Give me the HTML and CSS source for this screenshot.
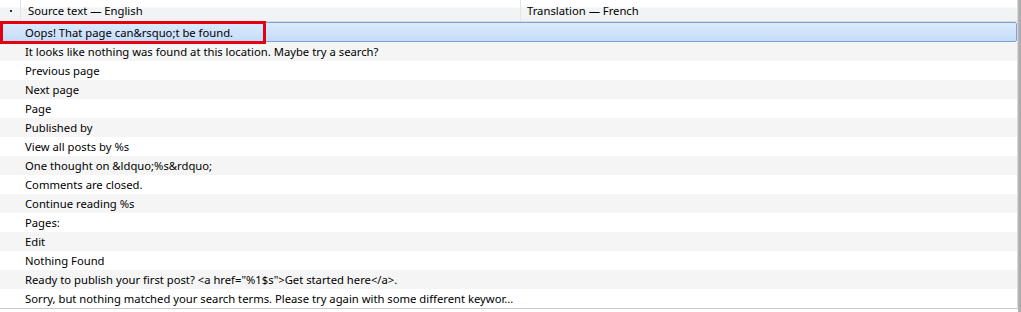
FILE: index.html
```html
<!DOCTYPE html>
<html>
<head>
<meta charset="utf-8">
<link rel="stylesheet" href="styles.css">
</head>
<body>
<div class="frame">
  <div class="list">
    <div class="header">
      <div class="hcell hdot"><span class="dot"></span></div>
      <div class="hcell hsrc">Source text — English</div>
      <div class="hcell htr">Translation — French</div>
    </div>
    <div class="rows">
      <div class="row selected"><span class="src">Oops! That page can&amp;rsquo;t be found.</span></div>
      <div class="row alt"><span class="src">It looks like nothing was found at this location. Maybe try a search?</span></div>
      <div class="row"><span class="src">Previous page</span></div>
      <div class="row alt"><span class="src">Next page</span></div>
      <div class="row"><span class="src">Page</span></div>
      <div class="row alt"><span class="src">Published by</span></div>
      <div class="row"><span class="src">View all posts by %s</span></div>
      <div class="row alt"><span class="src">One thought on &amp;ldquo;%s&amp;rdquo;</span></div>
      <div class="row"><span class="src">Comments are closed.</span></div>
      <div class="row alt"><span class="src">Continue reading %s</span></div>
      <div class="row"><span class="src">Pages:</span></div>
      <div class="row alt"><span class="src">Edit</span></div>
      <div class="row"><span class="src">Nothing Found</span></div>
      <div class="row alt"><span class="src">Ready to publish your first post? &lt;a href="%1$s"&gt;Get started here&lt;/a&gt;.</span></div>
      <div class="row"><span class="src">Sorry, but nothing matched your search terms. Please try again with some different keywor...</span></div>
    </div>
    <div class="callout"></div>
  </div>
  <div class="edge"></div>
</div>
</body>
</html>
```

FILE: styles.css
```css
html, body {
  margin: 0;
  padding: 0;
  background: #ffffff;
}
body {
  font-family: "Noto Sans", "Open Sans", "DejaVu Sans", sans-serif;
  font-size: 11.25px;
  color: #000;
}
.frame {
  display: flex;
  width: 1021px;
  height: 312px;
}
.list {
  position: relative;
  width: 1018px;
  height: 309px;
  border-right: 1px solid #d9d9d9;
  border-bottom: 1px solid #c8c8c8;
  box-sizing: border-box;
  display: flex;
  flex-direction: column;
}
.edge {
  width: 3px;
  height: 312px;
  background: linear-gradient(90deg, #b9b9b9, #a6a6a6);
}
.header {
  display: flex;
  height: 22px;
  box-sizing: border-box;
  border-bottom: 1px solid #d5dbe2;
  background: linear-gradient(#ffffff 0, #ffffff 7px, #f3f4f6 8px, #f1f2f4 100%);
}
.hcell {
  display: flex;
  align-items: center;
  box-sizing: border-box;
  line-height: 1;
  border-right: 1px solid #e2e4e7;
}
.hdot {
  width: 21px;
  justify-content: center;
  padding-left: 2px;
  padding-top: 1px;
}
.dot {
  width: 2px;
  height: 2px;
  background: #333;
}
.hsrc {
  width: 500px;
  padding-left: 7px;
}
.htr {
  flex: 1;
  padding-left: 6px;
  border-right: none;
}
.rows {
  display: flex;
  flex-direction: column;
}
.row {
  height: 19px;
  display: flex;
  align-items: center;
  padding-left: 25px;
  white-space: nowrap;
  box-sizing: border-box;
}
.row.alt {
  background: #f5f5f5;
}
.row.selected {
  height: 20px;
  padding-left: 24px;
  border: 1px solid #7da2ce;
  border-radius: 2px;
  background: linear-gradient(#dcebfc, #c4dcfa);
}
.callout {
  position: absolute;
  left: 0;
  top: 21px;
  width: 266px;
  height: 23px;
  box-sizing: border-box;
  border: 3px solid #e3000f;
}
```
